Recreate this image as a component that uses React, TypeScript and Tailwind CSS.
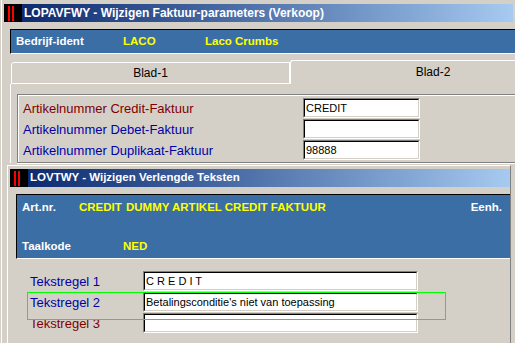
import React from 'react';

const WinIcon: React.FC = () => (
  <div className="w-[18px] h-[18px] bg-black flex items-center gap-[2px] pl-[4px] shrink-0">
    <div className="w-[2px] h-[15px] bg-[#FF0000]" />
    <div className="w-[2px] h-[15px] bg-[#FF0000]" />
  </div>
);

const TitleBar: React.FC<{ title: string; className?: string; textSize?: string }> = ({
  title,
  className = '',
  textSize = 'text-[12px]',
}) => (
  <div className={`h-[18px] flex items-center bg-linear-to-r from-[#0A246A] to-[#A6CAF0] ${className}`}>
    <WinIcon />
    <span className={`ml-[2px] text-white font-bold leading-none whitespace-nowrap ${textSize}`}>{title}</span>
  </div>
);

interface FieldProps {
  value?: string;
  width: string;
}

const Field: React.FC<FieldProps> = ({ value = '', width }) => (
  <div className={`${width} h-[20px] border-t border-l border-t-[#808080] border-l-[#808080] border-b border-r border-b-white border-r-white shrink-0`}>
    <div className="h-full bg-white border-t border-l border-t-black border-l-black border-b border-r border-b-[#D4D0C8] border-r-[#D4D0C8] flex items-center pl-[1px]">
      <span className="text-[11px] leading-none text-black whitespace-nowrap">{value}</span>
    </div>
  </div>
);

const RED = 'text-[#800000]';
const BLUE = 'text-[#0000A8]';

const topRows = [
  { label: 'Artikelnummer Credit-Faktuur', color: RED, value: 'CREDIT' },
  { label: 'Artikelnummer Debet-Faktuur', color: BLUE, value: '' },
  { label: 'Artikelnummer Duplikaat-Faktuur', color: BLUE, value: '98888' },
];

const textRows = [
  { label: 'Tekstregel 1', color: BLUE, value: 'C R E D I T' },
  { label: 'Tekstregel 2', color: BLUE, value: "Betalingsconditie's niet van toepassing" },
  { label: 'Tekstregel 3', color: RED, value: '' },
];

const App: React.FC = () => {
  return (
    <div className="relative w-[515px] h-[343px] overflow-hidden bg-[#D4D0C8] font-['Liberation_Sans',Arial,sans-serif] shadow-[inset_1px_0_0_#D4D0C8,inset_2px_0_0_#ffffff]">
      {/* upper window */}
      <div className="pt-[4px] pl-[4px]">
        <TitleBar title="LOPAVFWY - Wijzigen Faktuur-parameters (Verkoop)" className="w-[509px]" />
      </div>

      <div className="ml-[10px] mt-[7px] h-[25px] bg-[#3A6EA5] border-t border-l border-black border-b border-b-white flex items-center pl-[5px] text-[11.5px] font-bold whitespace-nowrap">
        <span className="w-[107px] text-white">Bedrijf-ident</span>
        <span className="w-[82px] text-[#FFFF00]">LACO</span>
        <span className="text-[#FFFF00]">Laco Crumbs</span>
      </div>

      <div className="ml-[10px] mt-[6px]">
        <div className="flex h-[24px]">
          <div className="ml-[1px] mt-[2px] w-[279px] h-[22px] shrink-0 border-t border-l border-r border-b border-white rounded-tl-[3px] flex items-center justify-center text-[12px] text-black">
            Blad-1
          </div>
          <div className="w-[285px] h-[24px] shrink-0 border-t border-l border-white rounded-tl-[3px] flex items-center justify-center pb-[1px] text-[12px] text-black">
            Blad-2
          </div>
        </div>

        <div className="border-l border-white pt-[10px] pl-[6px]">
          <div className="w-[500px] border-t border-l border-b border-[#808080] shadow-[0_1px_0_#ffffff]">
            <div className="border-t border-l border-white pt-[2px] pb-[2px] pl-[4px] flex flex-col gap-[1px]">
              {topRows.map((r) => (
                <div key={r.label} className="h-[20px] flex items-center">
                  <span className={`w-[280px] text-[13px] leading-none whitespace-nowrap ${r.color}`}>{r.label}</span>
                  <Field value={r.value} width="w-[117px]" />
                </div>
              ))}
            </div>
          </div>
        </div>
      </div>

      {/* lower window */}
      <div className="ml-[7px] mt-[2px] w-[504px] h-[200px] border-t border-l border-white border-r border-r-[#808080] pt-[3px] pl-[2px]">
        <TitleBar title="LOVTWY - Wijzigen Verlengde Teksten" textSize="text-[11.5px]" />

        <div className="ml-[6px] mt-[7px] h-[65px] bg-[#3A6EA5] border-t border-l border-black border-b border-b-white pl-[5px] pr-[8px] pt-[5px] text-[11.5px] font-bold leading-[14px] whitespace-nowrap">
          <div className="flex">
            <span className="w-[57px] text-white">Art.nr.</span>
            <span className="w-[47px] text-[#FFFF00]">CREDIT</span>
            <span className="text-[#FFFF00]">DUMMY ARTIKEL CREDIT FAKTUUR</span>
            <span className="ml-auto text-white">Eenh.</span>
          </div>
          <div className="flex mt-[25px]">
            <span className="w-[101px] text-white">Taalkode</span>
            <span className="text-[#FFFF00]">NED</span>
          </div>
        </div>

        <div className="mt-[12px] pl-[20px] flex flex-col gap-[1px]">
          {textRows.map((r) => (
            <div key={r.label} className="h-[20px] flex items-center">
              <span className={`w-[113px] text-[13px] leading-none whitespace-nowrap ${r.color}`}>{r.label}</span>
              <Field value={r.value} width="w-[275px]" />
            </div>
          ))}
        </div>
      </div>

      {/* focus highlight */}
      <div className="absolute left-[27px] top-[292px] w-[419px] h-[28px] shadow-[inset_0_0_0_1px_#00ff00] pointer-events-none" />
    </div>
  );
};

export default App;
